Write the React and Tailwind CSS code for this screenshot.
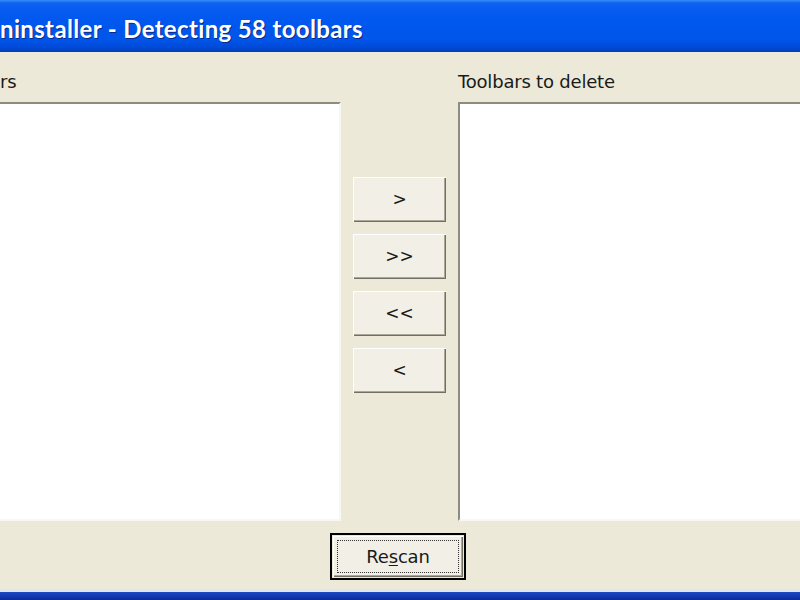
export default function App() {
  const raised =
    "bg-[#f2f0e6] shadow-[inset_1px_1px_0_#ffffff,inset_-1px_-1px_0_#716f64,inset_-2px_-2px_0_#aca899]";
  const moveButtons = [">", ">>", "<<", "<"];

  return (
    <div className="w-[800px] h-[600px] overflow-hidden flex flex-col bg-[#ece9d8] font-['DejaVu_Sans',sans-serif] text-[#1a1a1a]">
      {/* Title bar */}
      <div className="h-[52px] shrink-0 flex items-center bg-[linear-gradient(to_bottom,#3b8cf5_0px,#0d63f2_3px,#0a5cf0_8px,#0058ee_20px,#0055ea_40px,#0049d6_48px,#003cb8_52px)]">
        <span className="pt-[6px] text-[24px] font-bold text-white tracking-[0.35px] font-['Lato',sans-serif] [text-shadow:1px_1px_0_#0a2a8a]">
          ninstaller - Detecting 58 toolbars
        </span>
      </div>

      {/* Body */}
      <div className="flex-1 flex flex-col">
        <div className="flex h-[470px]">
          {/* Left list */}
          <div className="w-[341px] flex flex-col">
            <div className="h-[50px] flex items-center pt-[8px] text-[18px] tracking-[-0.2px]">rs</div>
            <div className="h-[419px] bg-white border-t-2 border-t-[#8e8c80] border-r-2 border-r-[#f8f7f2] border-b-2 border-b-[#f8f7f2]" />
          </div>

          {/* Move buttons */}
          <div className="w-[117px] flex flex-col items-center pt-[125px] gap-[12px]">
            {moveButtons.map((b, i) => (
              <div
                key={i}
                className={`w-[93px] h-[45px] flex items-center justify-center text-[17px] ${raised}`}
              >
                {b}
              </div>
            ))}
          </div>

          {/* Right list */}
          <div className="flex-1 flex flex-col">
            <div className="h-[50px] flex items-center pt-[8px] text-[18px] tracking-[-0.2px]">Toolbars to delete</div>
            <div className="h-[419px] bg-white border-t-2 border-t-[#8e8c80] border-l-2 border-l-[#8e8c80] border-b-2 border-b-[#f8f7f2]" />
          </div>
        </div>

        {/* Rescan */}
        <div className="flex justify-center pt-[11px]">
          <div className="ml-[-4px] w-[136px] h-[47px] border-2 border-black p-[1px]">
            <div className={`w-full h-full p-[4px] ${raised}`}>
              <div className="w-full h-full border border-dotted border-[#333] flex items-center justify-center text-[18px] tracking-[-0.2px]">
                Re<span className="underline underline-offset-2">s</span>can
              </div>
            </div>
          </div>
        </div>
      </div>

      {/* Bottom frame */}
      <div className="h-[3px] shrink-0 bg-[#dfe6f2]" />
      <div className="h-[8px] shrink-0 bg-[linear-gradient(to_bottom,#1b49c4,#0a2a9a)]" />
    </div>
  );
}
